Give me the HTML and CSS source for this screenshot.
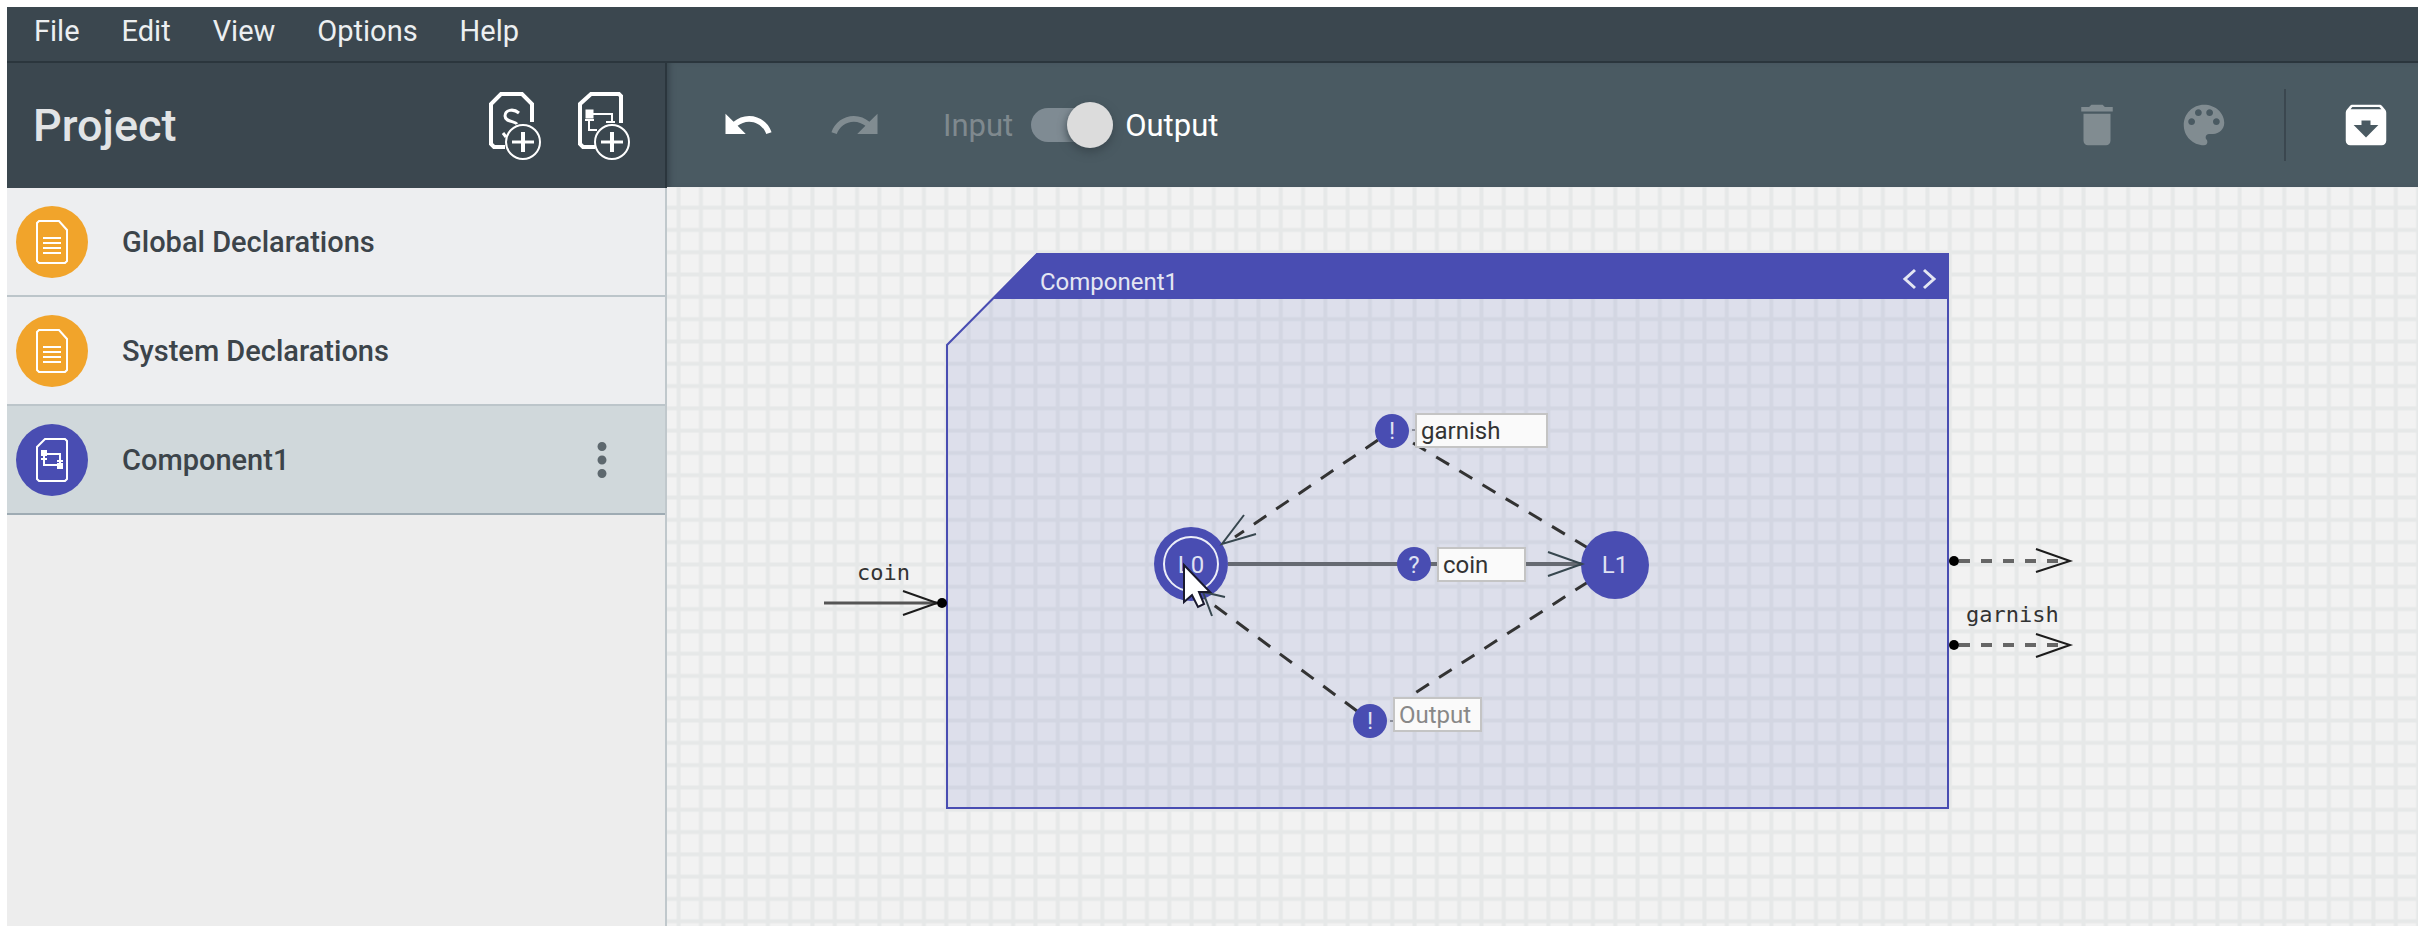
FILE: index.html
```html
<!DOCTYPE html>
<html lang="en">
<head>
  <meta charset="UTF-8" />
  <title>Component1</title>
  <link rel="stylesheet" href="styles.css">
</head>
<body>
  <div class="app">
    <nav class="menu-bar">
      <button>File</button>
      <button>Edit</button>
      <button>View</button>
      <button>Options</button>
      <button>Help</button>
    </nav>

    <div class="workspace">
      <aside class="sidebar">
        <header class="sidebar-header">
          <h1>Project</h1>
          <button class="icon-btn" aria-label="New system">
            <svg class="header-icon" viewBox="0 0 54 70">
              <path d="M16 56H5L2 53V13L12 3H33L43 13V31" stroke-width="4" />
              <path d="M30 22C24 17 16 19 16 25C16 31 26 30 28 33M14 42l3 4" stroke-width="3" />
              <circle cx="34" cy="51" r="17" stroke-width="2" />
              <path d="M34 41V61" stroke-width="4" />
              <path d="M23 51H45" stroke-width="3" />
            </svg>
          </button>
          <button class="icon-btn" aria-label="New component">
            <svg class="header-icon" viewBox="0 0 54 70">
              <path d="M17 56H5L2 53V13L13 3H41L43 5V32" stroke-width="4" />
              <path d="M11 23H34V32M11 28V39H19M7 29H16M28 31H37" stroke-width="2" />
              <rect class="solid" x="8" y="19" width="7" height="8" />
              <circle cx="34" cy="51" r="17" stroke-width="2" />
              <path d="M34 41V61" stroke-width="4" />
              <path d="M23 51H45" stroke-width="3" />
            </svg>
          </button>
        </header>

        <ul class="file-list">
          <li class="file">
            <svg class="file-icon declarations" viewBox="0 0 72 72">
              <circle cx="36" cy="36" r="36" />
              <path d="M23 15H43L51 24V55L49 57H23L21 55V17Z" />
              <path d="M27 32H45M27 37H45M27 42H45M27 47H45" />
            </svg>
            <a href="#global">Global Declarations</a>
          </li>
          <li class="file">
            <svg class="file-icon declarations" viewBox="0 0 72 72">
              <circle cx="36" cy="36" r="36" />
              <path d="M23 15H43L51 24V55L49 57H23L21 55V17Z" />
              <path d="M27 32H45M27 37H45M27 42H45M27 47H45" />
            </svg>
            <a href="#system">System Declarations</a>
          </li>
          <li class="file active">
            <svg class="file-icon component" viewBox="0 0 72 72">
              <circle cx="36" cy="36" r="36" />
              <path d="M29 15H49L51 17V55L49 57H23L21 55V23Z" />
              <path d="M28 30H44V42M28 30V41H44M25 35H31M41 37H47" />
              <path class="solid" d="M26 27h4v4h-4zM42 40h4v4h-4z" />
            </svg>
            <a href="#component1">Component1</a>
            <button class="icon-btn more" aria-label="More">
              <svg class="tool-icon" viewBox="0 0 24 24"><path d="M12 8c1.1 0 2-.9 2-2s-.9-2-2-2-2 .9-2 2 .9 2 2 2zm0 2c-1.1 0-2 .9-2 2s.9 2 2 2 2-.9 2-2-.9-2-2-2zm0 6c-1.1 0-2 .9-2 2s.9 2 2 2 2-.9 2-2-.9-2-2-2z" /></svg>
            </button>
          </li>
        </ul>
      </aside>

      <main class="editor">
        <div class="toolbar">
          <button class="icon-btn" aria-label="Undo">
            <svg class="tool-icon" viewBox="0 0 24 24"><path d="M12.5 8c-2.65 0-5.05.99-6.9 2.6L2 7v9h9l-3.62-3.62c1.39-1.16 3.16-1.88 5.12-1.88 3.54 0 6.55 2.31 7.6 5.5l2.37-.78C21.08 11.03 17.15 8 12.5 8z" /></svg>
          </button>
          <button class="icon-btn" aria-label="Redo" disabled>
            <svg class="tool-icon" viewBox="0 0 24 24"><path d="M18.4 10.6C16.55 8.99 14.15 8 11.5 8c-4.65 0-8.58 3.03-9.96 7.22L3.9 16c1.05-3.19 4.05-5.5 7.6-5.5 1.95 0 3.73.72 5.12 1.88L13 16h9V7l-3.6 3.6z" /></svg>
          </button>
          <label class="sync-toggle">
            <span class="off">Input</span>
            <input type="checkbox" checked>
            <span>Output</span>
          </label>
          <button class="icon-btn" aria-label="Delete" disabled>
            <svg class="tool-icon" viewBox="0 0 24 24"><path d="M6 19c0 1.1.9 2 2 2h8c1.1 0 2-.9 2-2V7H6v12zM19 4h-3.5l-1-1h-5l-1 1H5v2h14V4z" /></svg>
          </button>
          <button class="icon-btn" aria-label="Color" disabled>
            <svg class="tool-icon" viewBox="0 0 24 24"><path d="M12 3c-4.97 0-9 4.03-9 9s4.03 9 9 9c.83 0 1.5-.67 1.5-1.5 0-.39-.15-.74-.39-1.01-.23-.26-.38-.61-.38-.99 0-.83.67-1.5 1.5-1.5H16c2.76 0 5-2.24 5-5 0-4.42-4.03-8-9-8zm-5.5 9c-.83 0-1.5-.67-1.5-1.5S5.67 9 6.5 9 8 9.67 8 10.5 7.33 12 6.5 12zm3-4C8.67 8 8 7.33 8 6.5S8.67 5 9.5 5s1.5.67 1.5 1.5S10.33 8 9.5 8zm5 0c-.83 0-1.5-.67-1.5-1.5S13.67 5 14.5 5s1.5.67 1.5 1.5S15.33 8 14.5 8zm3 4c-.83 0-1.5-.67-1.5-1.5S16.67 9 17.5 9s1.5.67 1.5 1.5-.67 1.5-1.5 1.5z" /></svg>
          </button>
          <span class="divider"></span>
          <button class="icon-btn" aria-label="Messages">
            <svg class="tool-icon" viewBox="0 0 24 24"><path d="M20.54 5.23l-1.39-1.68C18.88 3.21 18.47 3 18 3H6c-.47 0-.88.21-1.16.55L3.46 5.23C3.17 5.57 3 6.02 3 6.5V19c0 1.1.9 2 2 2h14c1.1 0 2-.9 2-2V6.5c0-.48-.17-.93-.46-1.27zM12 17.5L6.5 12H10v-2h4v2h3.5L12 17.5zM5.12 5l.81-1h12l.94 1H5.12z" /></svg>
          </button>
        </div>

        <div class="canvas">
          <svg class="diagram">
            <defs>
              <pattern id="grid" x="0.5" y="9.5" width="22.3" height="22.3" patternUnits="userSpaceOnUse">
                <path class="grid-line" d="M11.15 0V22.3M0 11.15H22.3" />
              </pattern>
            </defs>
            <rect width="100%" height="100%" fill="url(#grid)" />

            <!-- component frame -->
            <path class="frame" d="M370 67H1281V621H280V158Z" />
            <path class="frame-header" d="M370 66H1282V112H325Z" />
            <text class="frame-title" x="373" y="103">Component1</text>
            <path class="code-icon" d="M1248 83L1238 92L1248 101M1257 83L1267 92L1257 101" />

            <!-- signature arrows -->
            <text class="signature" x="190" y="393">coin</text>
            <path class="signature-line" d="M157 416H270" />
            <path class="signature-head" d="M236 404L270 416L236 428" />
            <circle cx="275" cy="416" r="5" />

            <path class="signature-line dashed" d="M1292 374H1402" />
            <path class="signature-head" d="M1369 362L1403 374L1369 385" />
            <circle cx="1287" cy="374" r="5" />

            <text class="signature" x="1299" y="435">garnish</text>
            <path class="signature-line dashed" d="M1292 458H1402" />
            <path class="signature-head" d="M1369 447L1403 458L1369 470" />
            <circle cx="1287" cy="458" r="5" />

            <!-- edges -->
            <path class="edge sync" d="M561 377H915" />
            <path class="edge" d="M711 253L568 350M921 361L746 256M921 395L748 506M690 524L536 410" />
            <path class="tick" d="M745 243H748M723 534H726" />

            <!-- locations -->
            <circle class="location" cx="524" cy="377" r="37" />
            <circle class="initial" cx="524" cy="377" r="27" />
            <text class="location-name" x="524" y="386">L0</text>
            <circle class="location" cx="948" cy="378" r="34" />
            <text class="location-name" x="948" y="386">L1</text>

            <path class="head" d="M577 328L555 357L589 347M881 365L915 377L881 389M558 410L536 405L545 429" />

            <!-- nails -->
            <circle class="location" cx="725" cy="244" r="17" />
            <text class="nail-name" x="725" y="252">!</text>
            <circle class="location" cx="747" cy="377" r="17" />
            <text class="nail-name" x="747" y="386">?</text>
            <circle class="location" cx="703" cy="534" r="17" />
            <text class="nail-name" x="703" y="542">!</text>

            <path class="cursor" d="M517 378V415L525 408L531 420L537 417L532 405H543Z" />
          </svg>
          <input class="sync-label garnish" type="text" value="garnish" aria-label="Output garnish">
          <input class="sync-label coin" type="text" value="coin" aria-label="Input coin">
          <input class="sync-label output" type="text" placeholder="Output" aria-label="Output">
        </div>
      </main>
    </div>
  </div>
</body>
</html>
```

FILE: styles.css
```css
* {
  box-sizing: border-box;
}
body {
  margin: 0;
  padding: 7px 16px 22px 7px;
  min-height: 100vh;
  display: flex;
  background: #ffffff;
  font-family: Roboto, "Liberation Sans", sans-serif;
  font-size: 29px;
  color: #3c444a;
}
button {
  padding: 0;
  border: none;
  background: none;
  font: inherit;
  color: inherit;
  cursor: pointer;
}
button:disabled {
  opacity: 0.3;
  cursor: default;
}
svg {
  display: block;
}

.app {
  flex: 1;
  display: flex;
  flex-direction: column;
}
.menu-bar {
  display: flex;
  gap: 42px;
  padding: 7px 27px 13px;
  background: #3b474f;
  border-bottom: 2px solid #2b363d;
  color: #eceff1;
  line-height: 34px;
}
.workspace {
  flex: 1;
  display: flex;
}

/* sidebar */
.sidebar {
  flex: 0 0 660px;
  background: #ededed;
  border-right: 2px solid #c0c8cc;
}
.sidebar-header {
  display: flex;
  align-items: center;
  gap: 35px;
  height: 125px;
  margin-right: -2px;
  padding: 0 33px 0 26px;
  background: #3b474f;
  border-right: 2px solid #2b363d;
}
.sidebar-header h1 {
  flex: 1;
  margin: 0;
  font-size: 45px;
  font-weight: 500;
  color: #e2e4e6;
}
.header-icon {
  width: 54px;
  height: 70px;
  fill: none;
  stroke: #ffffff;
}
.header-icon .solid {
  fill: #ffffff;
}
.file-list {
  margin: 0;
  padding: 0;
  list-style: none;
}
.file {
  display: flex;
  align-items: center;
  gap: 34px;
  height: 109px;
  padding: 0 36px 0 9px;
  background: #edeef0;
  border-bottom: 2px solid #bcc5ca;
}
.file.active {
  background: #d0d8db;
  border-bottom-color: #9eabb3;
}
.file a {
  flex: 1;
  font-weight: 500;
  color: inherit;
  text-decoration: none;
}
.file-icon {
  width: 72px;
  height: 72px;
}
.file-icon path {
  fill: none;
  stroke: #ffffff;
  stroke-width: 2;
}
.file-icon .solid {
  fill: #ffffff;
}
.declarations {
  fill: #f1a42b;
}
.component {
  fill: #494db2;
}
.more {
  color: #5d686e;
}
.tool-icon {
  width: 54px;
  height: 54px;
  fill: currentColor;
}

/* editor */
.editor {
  flex: 1;
  display: flex;
  flex-direction: column;
  min-width: 0;
}
.toolbar {
  display: flex;
  align-items: center;
  gap: 53px;
  height: 124px;
  padding: 0 25px 0 54px;
  background: #4a5a62;
  color: #ffffff;
  box-shadow: inset 6px 0 6px -4px #36434a;
}
.sync-toggle {
  flex: 1;
  display: flex;
  align-items: center;
  gap: 12px;
  padding-left: 8px;
  font-size: 31px;
}
.sync-toggle .off {
  color: #7f898e;
}
.sync-toggle input {
  appearance: none;
  display: flex;
  align-items: center;
  justify-content: flex-end;
  width: 82px;
  height: 34px;
  margin: 0 0 0 6px;
  border-radius: 17px;
  background: #7f8b93;
}
.sync-toggle input::before {
  content: "";
  width: 46px;
  height: 46px;
  flex: none;
  border-radius: 50%;
  background: #dcdcdc;
  box-shadow: 0 4px 10px #3a474e;
}
.divider {
  width: 2px;
  height: 72px;
  background: #3b474f;
}

.canvas {
  position: relative;
  flex: 1;
  background: #f2f2f2;
  overflow: hidden;
}
.diagram {
  position: absolute;
  width: 100%;
  height: 100%;
}
.grid-line {
  stroke: #e6e8e8;
  stroke-width: 4;
}
.frame {
  fill: #4b5cba;
  fill-opacity: 0.12;
  stroke: #494db2;
  stroke-width: 2;
}
.frame-header {
  fill: #494db2;
}
.frame-title {
  font-size: 24px;
  fill: #e4e6f2;
}
.code-icon {
  fill: none;
  stroke: #e4e6f2;
  stroke-width: 3;
}
.signature {
  font-family: "DejaVu Sans Mono", monospace;
  font-size: 22px;
  fill: #333333;
}
.signature-line {
  stroke: #555555;
  stroke-width: 3;
}
.signature-line.dashed {
  stroke: #666666;
  stroke-width: 4;
  stroke-dasharray: 11 11;
}
.signature-head {
  fill: none;
  stroke: #1c1c1c;
  stroke-width: 2;
}
.edge {
  fill: none;
  stroke: #333333;
  stroke-width: 3;
  stroke-dasharray: 15 12;
}
.edge.sync {
  stroke: #666a72;
  stroke-width: 4;
  stroke-dasharray: none;
}
.tick {
  stroke: #8a8d99;
  stroke-width: 2;
}
.head {
  fill: none;
  stroke: #37474f;
  stroke-width: 2;
}
.location {
  fill: #494db2;
}
.initial {
  fill: none;
  stroke: #eceef8;
  stroke-width: 2;
}
.location-name,
.nail-name {
  font-size: 24px;
  text-anchor: middle;
  fill: #dfe1f2;
}
.cursor {
  fill: #ffffff;
  stroke: #1a1a2e;
  stroke-width: 2;
}
.sync-label {
  position: absolute;
  width: 89px;
  height: 35px;
  padding: 0 4px;
  border: 2px solid #c4c4c4;
  border-radius: 0;
  background: #fafafa;
  font: 24px Roboto, "Liberation Sans", sans-serif;
  color: #333333;
}
.sync-label::placeholder {
  color: #888888;
}
.sync-label.garnish {
  left: 748px;
  top: 226px;
  width: 133px;
}
.sync-label.coin {
  left: 770px;
  top: 360px;
}
.sync-label.output {
  left: 726px;
  top: 510px;
}
```
